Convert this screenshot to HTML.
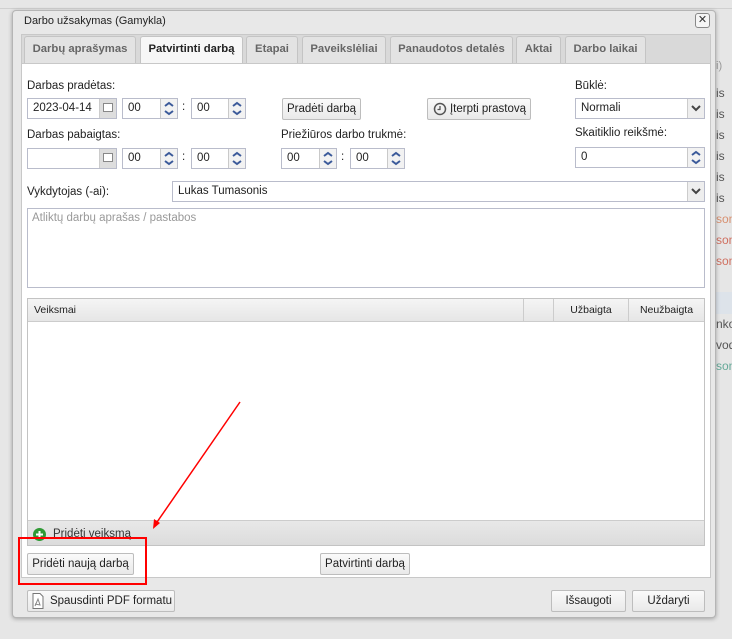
<!DOCTYPE html>
<html><head><meta charset="utf-8"><style>
*{box-sizing:border-box}
body{margin:0;width:732px;height:639px;background:#e6e6e6;font-family:"Liberation Sans",Arial,sans-serif;font-size:11px;color:#222;position:relative;overflow:hidden;white-space:nowrap}
.a{position:absolute}
.bgrow{position:absolute;left:0;width:732px;height:1px;background:#d8d8d8}
.dlg{position:absolute;left:12px;top:10px;width:704px;height:608px;background:#e8e8e8;border:1px solid #b5b5b5;border-radius:4px;box-shadow:0 1px 4px rgba(0,0,0,.3)}
.tab{position:absolute;top:36px;height:27px;background:#e3e3e3;border:1px solid #c4c4c4;border-bottom:none;border-radius:3px 3px 0 0;color:#666;font-weight:bold;font-size:11.3px;text-align:center;line-height:25px}
.panel{position:absolute;left:21px;top:63px;width:690px;height:515px;background:#fff;border:1px solid #c8c8c8}
.inp{position:absolute;height:21px;border:1px solid #b9bccb;background:#fff;font-size:11.5px;line-height:19px;padding-left:5px}
.spin{position:absolute;top:0;right:0;width:17px;height:19px;border-left:1px solid #c9c9c9;background:#f2f2f2}
.btn{position:absolute;height:22px;border:1px solid #bdbdbd;border-radius:2px;background:linear-gradient(#fafafa,#e9e9e9);font-size:11.5px;text-align:center;line-height:20px;color:#222}
.lbl{position:absolute;font-size:11.5px}
.sel{position:absolute;top:0;right:0;width:17px;height:19px;border-left:1px solid #ccc;background:#eee}
</style></head><body>
<div class="bgrow" style="top:8px;background:#d0d0d0"></div>
<div class="a" style="left:716px;top:60px;width:16px;height:17px;color:#999;font-size:11px">i)</div>
<div class="a" style="left:716px;top:83px;font-size:12px;color:#555;line-height:21px">is<br>is<br>is<br>is<br>is<br>is<br><span style="color:#d89070">soni</span><br><span style="color:#d07060">soni</span><br><span style="color:#d07060">soni</span><br><br><br>nko<br>vod<br><span style="color:#6a9">soni</span></div>
<div class="a" style="left:716px;top:292px;width:16px;height:22px;background:#dde3ea"></div>

<div class="dlg"></div>
<div class="a" style="left:24px;top:15px;font-size:11px;color:#222">Darbo užsakymas (Gamykla)</div>
<div class="a" style="left:695px;top:13px;width:15px;height:15px;border:1px solid #888;border-radius:3px;background:#f5f5f5;font-size:11px;line-height:13px;text-align:center;color:#333">✕</div>
<div class="a" style="left:21px;top:34px;width:690px;height:30px;background:#d9d9d9;border:1px solid #c8c8c8"></div>
<div class="tab" style="left:24px;width:112px">Darbų aprašymas</div>
<div class="tab" style="left:140px;width:103px;background:#f7f7f7;color:#222;height:29px">Patvirtinti darbą</div>
<div class="tab" style="left:246px;width:52px">Etapai</div>
<div class="tab" style="left:302px;width:84px">Paveikslėliai</div>
<div class="tab" style="left:390px;width:123px">Panaudotos detalės</div>
<div class="tab" style="left:516px;width:45px">Aktai</div>
<div class="tab" style="left:565px;width:81px">Darbo laikai</div>
<div class="panel"></div>

<div class="lbl" style="left:27px;top:80px">Darbas pradėtas:</div>
<div class="inp" style="left:27px;top:98px;width:90px">2023-04-14<div class="sel" style="width:17px;background:#ddd"><span style="display:block;margin:4px 3px;width:10px;height:9px;border:1px solid #888;background:#fff"></span></div></div>
<div class="inp" style="left:122px;top:98px;width:56px">00<div class="spin"><svg width="16" height="19"><path d="M4 7l4-3 4 3M4 12l4 3 4-3" stroke="#3b5a9a" stroke-width="2" fill="none"/></svg></div></div>
<div class="lbl" style="left:182px;top:101px">:</div>
<div class="inp" style="left:191px;top:98px;width:55px">00<div class="spin"><svg width="16" height="19"><path d="M4 7l4-3 4 3M4 12l4 3 4-3" stroke="#3b5a9a" stroke-width="2" fill="none"/></svg></div></div>
<div class="btn" style="left:282px;top:98px;width:79px">Pradėti darbą</div>
<div class="btn" style="left:427px;top:98px;width:104px;padding-left:18px">Įterpti prastovą<svg class="a" style="left:5px;top:3px" width="14" height="14"><circle cx="7" cy="7" r="5.5" stroke="#555" stroke-width="1.5" fill="none"/><path d="M7 4v3.5h-2.5" stroke="#555" stroke-width="1.3" fill="none"/></svg></div>
<div class="lbl" style="left:575px;top:80px">Būklė:</div>
<div class="inp" style="left:575px;top:98px;width:130px">Normali<div class="sel" style="width:17px"><svg width="16" height="19"><path d="M4 7l4 4 4-4" stroke="#444" stroke-width="2" fill="none"/></svg></div></div>

<div class="lbl" style="left:27px;top:129px">Darbas pabaigtas:</div>
<div class="inp" style="left:27px;top:148px;width:90px"><div class="sel" style="width:17px;background:#ddd"><span style="display:block;margin:4px 3px;width:10px;height:9px;border:1px solid #888;background:#fff"></span></div></div>
<div class="inp" style="left:122px;top:148px;width:56px">00<div class="spin"><svg width="16" height="19"><path d="M4 7l4-3 4 3M4 12l4 3 4-3" stroke="#3b5a9a" stroke-width="2" fill="none"/></svg></div></div>
<div class="lbl" style="left:182px;top:151px">:</div>
<div class="inp" style="left:191px;top:148px;width:55px">00<div class="spin"><svg width="16" height="19"><path d="M4 7l4-3 4 3M4 12l4 3 4-3" stroke="#3b5a9a" stroke-width="2" fill="none"/></svg></div></div>
<div class="lbl" style="left:281px;top:129px">Priežiūros darbo trukmė:</div>
<div class="inp" style="left:281px;top:148px;width:56px">00<div class="spin"><svg width="16" height="19"><path d="M4 7l4-3 4 3M4 12l4 3 4-3" stroke="#3b5a9a" stroke-width="2" fill="none"/></svg></div></div>
<div class="lbl" style="left:341px;top:151px">:</div>
<div class="inp" style="left:350px;top:148px;width:55px">00<div class="spin"><svg width="16" height="19"><path d="M4 7l4-3 4 3M4 12l4 3 4-3" stroke="#3b5a9a" stroke-width="2" fill="none"/></svg></div></div>
<div class="lbl" style="left:575px;top:127px">Skaitiklio reikšmė:</div>
<div class="inp" style="left:575px;top:147px;width:130px">0<div class="spin"><svg width="16" height="19"><path d="M4 7l4-3 4 3M4 12l4 3 4-3" stroke="#3b5a9a" stroke-width="2" fill="none"/></svg></div></div>

<div class="lbl" style="left:27px;top:186px">Vykdytojas (-ai):</div>
<div class="inp" style="left:172px;top:181px;width:533px">Lukas Tumasonis<div class="sel" style="width:17px"><svg width="16" height="19"><path d="M4 7l4 4 4-4" stroke="#444" stroke-width="2" fill="none"/></svg></div></div>
<div class="inp" style="left:27px;top:208px;width:678px;height:80px;color:#999;line-height:16px;padding-top:1px;padding-left:4px">Atliktų darbų aprašas / pastabos</div>

<div class="a" style="left:27px;top:298px;width:678px;height:248px;border:1px solid #c3c3c3;background:#fff"></div>
<div class="a" style="left:28px;top:299px;width:676px;height:23px;background:linear-gradient(#f5f5f5,#e6e6e6);border-bottom:1px solid #ccc;font-size:10.5px;line-height:22px"><span class="a" style="left:6px">Veiksmai</span><span class="a" style="left:495px;top:0;height:22px;border-left:1px solid #ccc"></span><span class="a" style="left:525px;top:0;height:22px;border-left:1px solid #ccc;width:75px;text-align:center">Užbaigta</span><span class="a" style="left:600px;top:0;height:22px;border-left:1px solid #ccc;width:76px;text-align:center">Neužbaigta</span></div>
<div class="a" style="left:28px;top:520px;width:676px;height:25px;background:linear-gradient(#e8e8e8,#dcdcdc);border-top:1px solid #ccc;font-size:11.5px;line-height:26px;padding-left:25px;color:#333">Pridėti veiksmą<svg class="a" style="left:5px;top:7px" width="13" height="13"><circle cx="6.5" cy="6.5" r="6.5" fill="#2f9a35"/><path d="M6.5 3v7M3 6.5h7" stroke="#fff" stroke-width="2"/></svg></div>

<div class="btn" style="left:27px;top:553px;width:107px">Pridėti naują darbą</div>
<div class="btn" style="left:320px;top:553px;width:90px">Patvirtinti darbą</div>
<div class="a" style="left:18px;top:537px;width:129px;height:48px;border:2px solid #f00"></div>
<svg class="a" style="left:0;top:0" width="732" height="639"><path d="M240 402L155 525" stroke="#f00" stroke-width="1.5"/><path d="M153 529l1-10 6 4z" fill="#f00"/></svg>

<div class="btn" style="left:27px;top:590px;width:148px;padding-left:20px">Spausdinti PDF formatu<svg class="a" style="left:4px;top:2px" width="12" height="16"><path d="M1 .5h7l3 3v12h-10z" stroke="#777" fill="#fff"/><path d="M3 13l3-7 2 6-5-1" stroke="#888" fill="none"/></svg></div>
<div class="btn" style="left:551px;top:590px;width:75px">Išsaugoti</div>
<div class="btn" style="left:632px;top:590px;width:73px">Uždaryti</div>
</body></html>
